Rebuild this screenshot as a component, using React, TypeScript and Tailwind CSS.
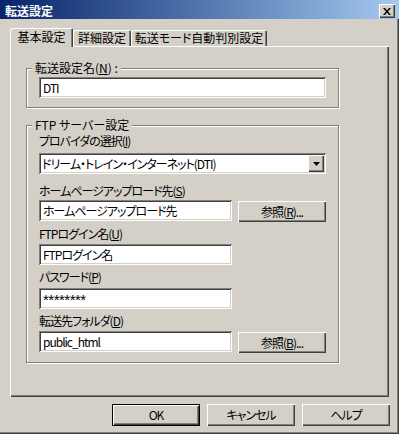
import React from 'react';

// Win2000-style bevels
const sunken =
  'bg-white shadow-[inset_1px_1px_0_#808080,inset_-1px_-1px_0_#ffffff,inset_2px_2px_0_#404040,inset_-2px_-2px_0_#d4d0c8]';
const raised =
  'bg-[#d4d0c8] shadow-[inset_1px_1px_0_#ffffff,inset_-1px_-1px_0_#404040,inset_-2px_-2px_0_#808080]';

const Key = ({ k }: { k: string }) => <span className="underline underline-offset-[1px]">{k}</span>;

const Label = ({ children, className = '' }: { children: React.ReactNode; className?: string }) => (
  <div className={`h-[14px] leading-[14px] whitespace-nowrap ${className}`}>{children}</div>
);

const Field = ({ value, width, className = '' }: { value: string; width: string; className?: string }) => (
  <div className={`${sunken} ${width} h-[21px] flex items-center pl-[4px] whitespace-nowrap ${className}`}>{value}</div>
);

const BrowseButton = ({ k }: { k: string }) => (
  <div className={`${raised} w-[88px] h-[21px] mt-px flex items-center justify-center`}>
    参照(<Key k={k} />)...
  </div>
);

const tabs = [
  { label: '基本設定', width: 'w-[63px]', active: true },
  { label: '詳細設定', width: 'w-[58px]', active: false },
  { label: '転送モード自動判別設定', width: 'w-[136px]', active: false },
];

export default function App() {
  return (
    <div className="w-[399px] h-[434px] overflow-hidden bg-[#d4d0c8] text-[12px] text-black tracking-[-1px] font-['Noto_Sans_CJK_JP',sans-serif] [font-feature-settings:'palt'] shadow-[inset_-1px_-1px_0_#404040,inset_-2px_-2px_0_#808080]">
      {/* title bar */}
      <div className="h-[19px] flex items-start bg-linear-to-r from-[#0a246a] to-[#a6caf0]">
        <span className="ml-[5px] mt-[4px] leading-[14px] font-bold text-white tracking-normal">転送設定</span>
        <div className="flex-1" />
        <div className={`${raised} mt-[4px] mr-[4px] w-[16px] h-[14px] flex items-center justify-center`}>
          <svg width="8" height="7" viewBox="0 0 8 7">
            <path d="M0 0h2l2 2.4L6 0h2L5 3.5L8 7H6L4 4.6L2 7H0l3-3.5z" fill="#000" />
          </svg>
        </div>
      </div>

      <div className="px-[10px] pt-[9px]">
        {/* tabs */}
        <div className="relative z-10 flex items-end h-[18px] tracking-normal">
          {tabs.map((t) =>
            t.active ? (
              <div
                key={t.label}
                className={`${t.width} h-[19px] -mb-px pt-[2px] leading-[14px] text-center whitespace-nowrap rounded-t-[2px] bg-[#d4d0c8] shadow-[inset_1px_1px_0_#ffffff,inset_-1px_0_0_#404040,inset_-2px_0_0_#808080]`}
              >
                {t.label}
              </div>
            ) : (
              <div
                key={t.label}
                className={`${t.width} h-[16px] pt-[1px] leading-[14px] text-center whitespace-nowrap rounded-t-[2px] bg-[#d4d0c8] shadow-[inset_1px_1px_0_#ffffff,inset_-1px_0_0_#404040,inset_-2px_0_0_#808080]`}
              >
                {t.label}
              </div>
            )
          )}
        </div>

        {/* tab panel */}
        <div className="w-[379px] h-[351px] pl-[16px] pt-[15px] flex flex-col shadow-[inset_1px_1px_0_#ffffff,inset_-1px_-1px_0_#404040,inset_-2px_-2px_0_#808080]">
          <fieldset className="w-[313px] border border-[#808080] shadow-[inset_1px_1px_0_#ffffff,1px_1px_0_#ffffff]">
            <legend className="ml-[5px] px-[3px] h-[14px] leading-[14px] bg-[#d4d0c8] tracking-normal">
              転送設定名(<Key k="N" />) :
            </legend>
            <div className="pl-[12px] pt-[2px] pb-[9px]">
              <Field value="DTI" width="w-[287px]" />
            </div>
          </fieldset>

          <fieldset className="mt-[10px] w-[313px] border border-[#808080] shadow-[inset_1px_1px_0_#ffffff,1px_1px_0_#ffffff]">
            <legend className="ml-[5px] px-[3px] h-[14px] leading-[14px] bg-[#d4d0c8] tracking-normal">FTP サーバー設定</legend>
            <div className="pl-[12px] pt-[2px] pb-[9px] flex flex-col">
              <Label>
                プロバイダの選択(<Key k="I" />)
              </Label>
              <div className={`${sunken} mt-[5px] w-[287px] h-[21px] flex items-center p-[2px]`}>
                <span className="flex-1 pl-[1px] leading-[17px] whitespace-nowrap overflow-hidden">
                  ドリーム・トレイン・インターネット(DTI)
                </span>
                <div className={`${raised} w-[16px] h-[17px] flex items-center justify-center`}>
                  <svg width="7" height="4" viewBox="0 0 7 4">
                    <path d="M0 0h7L3.5 4z" fill="#000" />
                  </svg>
                </div>
              </div>

              <Label className="mt-[10px]">
                ホームページアップロード先(<Key k="S" />)
              </Label>
              <div className="mt-[2px] h-[22px] flex items-start gap-[6px]">
                <Field value="ホームページアップロード先" width="w-[193px]" />
                <BrowseButton k="R" />
              </div>

              <Label className="mt-[5px]">
                FTPログイン名(<Key k="U" />)
              </Label>
              <Field value="FTPログイン名" width="w-[193px]" className="mt-[3px]" />

              <Label className="mt-[5px]">
                パスワード(<Key k="P" />)
              </Label>
              <Field
                value="********"
                width="w-[193px]"
                className="mt-[4px] pt-[4px] tracking-[-0.5px] font-['Liberation_Sans',sans-serif] text-[15px]"
              />

              <Label className="mt-[5px]">
                転送先フォルダ(<Key k="D" />)
              </Label>
              <div className="mt-[3px] h-[22px] flex items-start gap-[6px]">
                <Field value="public_html" width="w-[193px]" />
                <BrowseButton k="B" />
              </div>
            </div>
          </fieldset>
        </div>
      </div>

      {/* dialog buttons */}
      <div className="mt-[7px] pr-[9px] flex justify-end gap-[7px]">
        <div className="w-[88px] h-[22px] border border-black">
          <div className={`${raised} w-full h-full flex items-center justify-center`}>OK</div>
        </div>
        <div className={`${raised} w-[88px] h-[22px] flex items-center justify-center`}>キャンセル</div>
        <div className={`${raised} w-[88px] h-[22px] flex items-center justify-center`}>ヘルプ</div>
      </div>
    </div>
  );
}
